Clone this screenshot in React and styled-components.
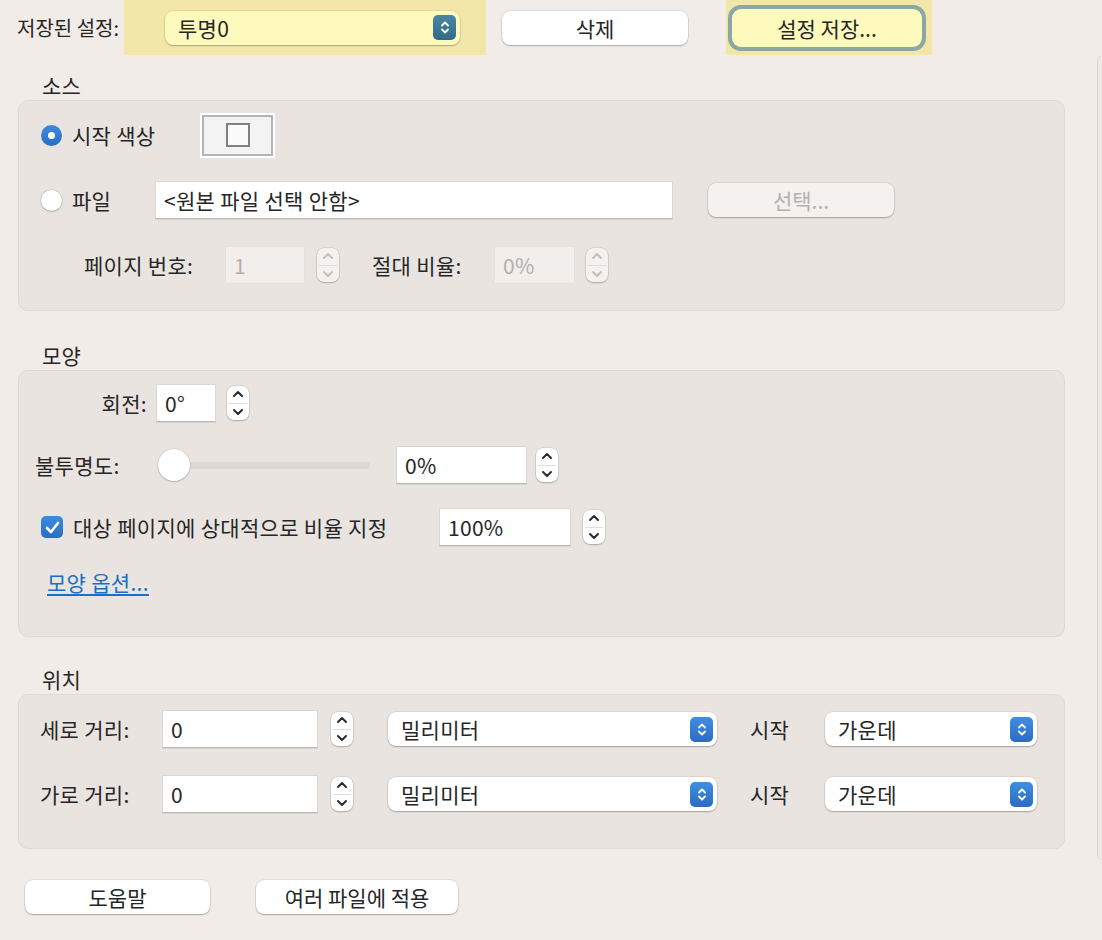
import React from 'react'
import styled, { createGlobalStyle, css } from 'styled-components'

const GlobalStyle = createGlobalStyle`
  html, body {
    margin: 0;
    padding: 0;
    background: #f1ece8;
  }
  body {
    font-family: "Noto Sans CJK KR", "Noto Sans", sans-serif;
    color: #262626;
  }
`

const Page = styled.div`
  display: flex;
  width: 1102px;
  height: 940px;
  background: #f1ece8;
  font-size: 21px;
  letter-spacing: 0.3px;
  overflow: hidden;
`

const Main = styled.div`
  width: 1065px;
  display: flex;
  flex-direction: column;
`

const SidePanel = styled.div`
  flex: 1;
  margin: 56px 0 80px 32px;
  border-left: 1px solid #dcd6d2;
  border-top: 1px solid #dcd6d2;
  border-bottom: 1px solid #dcd6d2;
  border-radius: 8px 0 0 8px;
  background: #eee9e5;
`

const TopBar = styled.div`
  display: flex;
  align-items: center;
  height: 55px;
`

const TopLabel = styled.span`
  width: 107px;
  margin-left: 17px;
  font-size: 20px;
  letter-spacing: 0;
  white-space: nowrap;
`

const Highlight = styled.div`
  display: flex;
  align-items: center;
  height: 55px;
  width: ${p => p.$w}px;
  padding-left: ${p => p.$pad}px;
  margin-left: ${p => p.$ml || 0}px;
  box-sizing: border-box;
  background: #f3e6a9;
`

const PushButton = styled.button`
  font: inherit;
  color: #262626;
  width: ${p => p.$w}px;
  height: 34px;
  margin-left: ${p => p.$ml || 0}px;
  padding: 0;
  border: none;
  border-radius: 8px;
  background: #ffffff;
  box-shadow: 0 0 0 0.5px rgba(0, 0, 0, 0.12), 0 1px 1.5px rgba(0, 0, 0, 0.25);
  ${p => p.$disabled && css`
    color: #b5b0ad;
    background: #f4f1ee;
  `}
  ${p => p.$focused && css`
    height: 38px;
    background: #fef9bd;
    box-shadow: 0 0 0 4px #8aa7a5;
    border-radius: 9px;
  `}
`

const SectionTitle = styled.div`
  margin: ${p => p.$mt}px 0 0 42px;
  height: 30px;
  line-height: 30px;
`

const Panel = styled.div`
  margin-left: 18px;
  width: 1047px;
  box-sizing: border-box;
  background: #e9e4e0;
  border: 1px solid #dfd9d5;
  border-radius: 10px;
  padding: ${p => p.$pad};
  display: flex;
  flex-direction: column;
  gap: ${p => p.$gap}px;
`

const Row = styled.div`
  display: flex;
  align-items: center;
  height: ${p => p.$h || 40}px;
  margin-top: ${p => p.$mt || 0}px;
`

const Label = styled.span`
  white-space: nowrap;
  flex-shrink: 0;
  width: ${p => (p.$w ? `${p.$w}px` : 'auto')};
  text-align: ${p => p.$align || 'left'};
  margin-left: ${p => p.$ml || 0}px;
`

const Field = styled.div`
  width: ${p => p.$w}px;
  height: 38px;
  margin-left: ${p => p.$ml || 0}px;
  flex-shrink: 0;
  box-sizing: border-box;
  display: flex;
  align-items: center;
  padding-left: 8px;
  background: #ffffff;
  border: 1px solid #dcd7d3;
  border-bottom-color: #bfbab6;
  box-shadow: 0 1px 0 rgba(0, 0, 0, 0.08);
  white-space: nowrap;
  ${p => p.$disabled && css`
    background: #f2eeeb;
    color: #b3aeab;
    border-color: #e6e1dd;
    box-shadow: none;
  `}
`

const StepperBox = styled.div`
  width: 22px;
  height: 34px;
  margin-left: ${p => p.$ml || 0}px;
  flex-shrink: 0;
  border-radius: 7px;
  background: ${p => (p.$disabled ? '#f4f1ee' : '#ffffff')};
  box-shadow: 0 0 0 0.5px rgba(0, 0, 0, 0.14), 0 1px 1.5px rgba(0, 0, 0, 0.2);
  display: flex;
  flex-direction: column;
  align-items: center;
  justify-content: space-between;
  padding: 3px 0;
  box-sizing: border-box;
  position: relative;
  &::after {
    content: '';
    position: absolute;
    left: 2px;
    right: 2px;
    top: 50%;
    height: 1px;
    background: #e2ddd9;
  }
`

const Stepper = ({ ml, disabled }) => {
  const c = disabled ? '#c4bfbb' : '#2b2b2b'
  return (
    <StepperBox $ml={ml} $disabled={disabled}>
      <svg width="12" height="10" viewBox="0 0 12 10">
        <path d="M2 7 L6 3 L10 7" fill="none" stroke={c} strokeWidth="2" strokeLinecap="round" strokeLinejoin="round" />
      </svg>
      <svg width="12" height="10" viewBox="0 0 12 10">
        <path d="M2 3 L6 7 L10 3" fill="none" stroke={c} strokeWidth="2" strokeLinecap="round" strokeLinejoin="round" />
      </svg>
    </StepperBox>
  )
}

const PopupBox = styled.div`
  width: ${p => p.$w}px;
  height: 34px;
  margin-left: ${p => p.$ml || 0}px;
  flex-shrink: 0;
  box-sizing: border-box;
  display: flex;
  align-items: center;
  justify-content: space-between;
  padding: 0 4px 0 13px;
  border-radius: 8px;
  background: ${p => (p.$yellow ? '#fef9bd' : '#ffffff')};
  box-shadow: 0 0 0 0.5px rgba(0, 0, 0, 0.12), 0 1px 1.5px rgba(0, 0, 0, 0.25);
  white-space: nowrap;
`

const Chevrons = styled.div`
  width: 23px;
  height: 25px;
  border-radius: 5px;
  display: flex;
  align-items: center;
  justify-content: center;
  background: ${p => (p.$yellow
    ? 'linear-gradient(#4a86a0, #2f6c88)'
    : 'linear-gradient(#3f8fe3, #2a6cc1)')};
`

const Popup = ({ w, ml, yellow, children }) => (
  <PopupBox $w={w} $ml={ml} $yellow={yellow}>
    <span>{children}</span>
    <Chevrons $yellow={yellow}>
      <svg width="12" height="17" viewBox="0 0 12 17">
        <path d="M3 6.5 L6 3.5 L9 6.5 M3 10.5 L6 13.5 L9 10.5" fill="none" stroke="#ffffff" strokeWidth="1.8" strokeLinecap="round" strokeLinejoin="round" />
      </svg>
    </Chevrons>
  </PopupBox>
)

const Radio = styled.span`
  width: 21px;
  height: 21px;
  border-radius: 50%;
  margin-left: 22px;
  margin-right: 10px;
  box-sizing: border-box;
  flex-shrink: 0;
  display: flex;
  align-items: center;
  justify-content: center;
  ${p => (p.$on
    ? css`
      background: linear-gradient(#3c8be0, #2a6dc3);
      &::after {
        content: '';
        width: 7px;
        height: 7px;
        border-radius: 50%;
        background: #ffffff;
      }
    `
    : css`
      background: #ffffff;
      box-shadow: 0 0 0 0.5px rgba(0, 0, 0, 0.15), 0 1px 1.5px rgba(0, 0, 0, 0.2);
    `)}
`

const CheckBox = styled.span`
  width: 22px;
  height: 22px;
  border-radius: 5px;
  margin-left: 22px;
  margin-right: 10px;
  flex-shrink: 0;
  display: flex;
  align-items: center;
  justify-content: center;
  background: linear-gradient(#3c8be0, #2a6dc3);
`

const ColorWell = styled.div`
  width: 75px;
  height: 45px;
  flex-shrink: 0;
  box-sizing: border-box;
  border: 2px solid #ffffff;
  outline: 2px solid #b4b4b4;
  outline-offset: -4px;
  background: #f3f3f3;
  display: flex;
  align-items: center;
  justify-content: center;
  &::after {
    content: '';
    width: 20px;
    height: 20px;
    border: 2px solid #808080;
    background: #fbfbfb;
  }
`

const SliderTrack = styled.div`
  width: 210px;
  height: 7px;
  flex-shrink: 0;
  border-radius: 4px;
  background: #ddd8d4;
  position: relative;
`

const SliderThumb = styled.div`
  position: absolute;
  left: -2px;
  top: 50%;
  width: 32px;
  height: 32px;
  margin-top: -16px;
  border-radius: 50%;
  background: #ffffff;
  box-shadow: 0 0 0 0.5px rgba(0, 0, 0, 0.1), 0 1px 2px rgba(0, 0, 0, 0.2);
`

const LinkText = styled.a`
  margin-left: 28px;
  color: #1d6dc4;
  text-decoration: underline;
  text-underline-offset: 3px;
`

const BottomBar = styled.div`
  display: flex;
  align-items: center;
  margin-top: 31px;
  padding-left: 25px;
`

export default function App() {
  return (
    <Page>
      <GlobalStyle />
      <Main>
        <TopBar>
          <TopLabel>저장된 설정:</TopLabel>
          <Highlight $w={362} $pad={41}>
            <Popup w={295} yellow>투명0</Popup>
          </Highlight>
          <PushButton $w={186} $ml={16}>삭제</PushButton>
          <Highlight $w={206} $pad={6} $ml={38}>
            <PushButton $w={190} $focused>설정 저장...</PushButton>
          </Highlight>
        </TopBar>

        <SectionTitle $mt={15}>소스</SectionTitle>
        <Panel $pad="11px 0 22px" $gap={19}>
          <Row $h={46}>
            <Radio $on />
            <Label $w={128}>시작 색상</Label>
            <ColorWell />
          </Row>
          <Row $h={46}>
            <Radio />
            <Label $w={83}>파일</Label>
            <Field $w={518}>&lt;원본 파일 선택 안함&gt;</Field>
            <PushButton $w={186} $ml={35} $disabled>선택...</PushButton>
          </Row>
          <Row $h={46}>
            <Label $w={141} $ml={65}>페이지 번호:</Label>
            <Field $w={80} $disabled>1</Field>
            <Stepper ml={12} disabled />
            <Label $w={122} $ml={33}>절대 비율:</Label>
            <Field $w={81} $disabled>0%</Field>
            <Stepper ml={11} disabled />
          </Row>
        </Panel>

        <SectionTitle $mt={29}>모양</SectionTitle>
        <Panel $pad="12px 0 36px" $gap={22}>
          <Row>
            <Label $w={128} $align="right">회전:</Label>
            <Field $w={60} $ml={9}>0°</Field>
            <Stepper ml={11} />
          </Row>
          <Row>
            <Label $ml={16} $w={125}>불투명도:</Label>
            <SliderTrack>
              <SliderThumb />
            </SliderTrack>
            <Field $w={131} $ml={26}>0%</Field>
            <Stepper ml={9} />
          </Row>
          <Row>
            <CheckBox>
              <svg width="15" height="13" viewBox="0 0 15 13">
                <path d="M2 7 L6 11 L13 2" fill="none" stroke="#ffffff" strokeWidth="2.6" strokeLinecap="round" strokeLinejoin="round" />
              </svg>
            </CheckBox>
            <Label $w={366}>대상 페이지에 상대적으로 비율 지정</Label>
            <Field $w={132}>100%</Field>
            <Stepper ml={12} />
          </Row>
          <Row $h={36} $mt={-5}>
            <LinkText>모양 옵션...</LinkText>
          </Row>
        </Panel>

        <SectionTitle $mt={27}>위치</SectionTitle>
        <Panel $pad="14px 0 34px" $gap={25}>
          {['세로 거리:', '가로 거리:'].map(l => (
            <Row key={l}>
              <Label $ml={21} $w={122}>{l}</Label>
              <Field $w={156}>0</Field>
              <Stepper ml={13} />
              <Popup w={329} ml={35}>밀리미터</Popup>
              <Label $ml={33} $w={75}>시작</Label>
              <Popup w={212}>가운데</Popup>
            </Row>
          ))}
        </Panel>

        <BottomBar>
          <PushButton $w={185}>도움말</PushButton>
          <PushButton $w={202} $ml={46}>여러 파일에 적용</PushButton>
        </BottomBar>
      </Main>
      <SidePanel />
    </Page>
  )
}
